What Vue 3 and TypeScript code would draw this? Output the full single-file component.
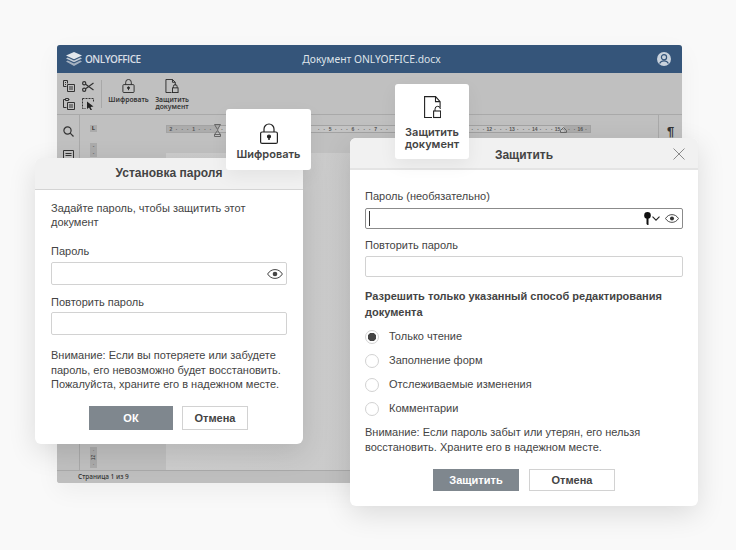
<script setup lang="ts">
const STEP = 5.75
const START = 170
const labelAt = (i: number): string => {
  if (i % 4 !== 0) return '·'
  const n = i / 4 - 2
  return n === 0 ? '' : String(Math.abs(n))
}
const hidden = (x: number) => (x > 222 && x < 315) || (x > 391 && x < 473)
const hMarks: string[] = Array.from({ length: 74 }, (_, i) =>
  hidden(START + i * STEP) ? '' : labelAt(i),
)
const modes = [
  { label: 'Только чтение', checked: true },
  { label: 'Заполнение форм', checked: false },
  { label: 'Отслеживаемые изменения', checked: false },
  { label: 'Комментарии', checked: false },
]
</script>

<template>
  <main class="page">
    <section class="app">
      <header class="titlebar">
        <div class="logo">
          <svg width="16" height="14" viewBox="0 0 16 14">
            <path d="M8 0 16 3.6 8 7.2 0 3.6Z" fill="#e3e7ec" />
            <path d="M1.8 5.6 8 8.4 14.2 5.6 16 6.6 8 10.2 0 6.6Z" fill="#c3ccd6" />
            <path d="M1.8 8.6 8 11.4 14.2 8.6 16 9.6 8 14 0 9.6Z" fill="#a4b1c0" />
          </svg>
          <span>ONLYOFFICE</span>
        </div>
        <div class="doc-title">Документ ONLYOFFICE.docx</div>
        <svg class="avatar" width="14" height="14" viewBox="0 0 14 14">
          <circle cx="7" cy="7" r="7" fill="#c9d2dc" />
          <circle cx="7" cy="5.2" r="2.6" fill="none" stroke="#35557a" stroke-width="1.2" />
          <path d="M2.6 11.4c1-2 2.6-2.6 4.4-2.6s3.4.6 4.4 2.6" fill="none" stroke="#35557a" stroke-width="1.2" />
        </svg>
      </header>

      <div class="toolbar">
        <div class="tools-grid">
          <svg width="12" height="12" viewBox="0 0 12 12" fill="none" stroke="#333">
            <path d="M4.5 3.5V.5H.5v6h3M2 2.5h1M2 4.5h1" /><path d="M4.5 4.5h7v7h-7zM6 7h4M6 9h4" />
          </svg>
          <svg width="12" height="11" viewBox="0 0 12 11" fill="none" stroke="#333" stroke-width="1.2">
            <circle cx="2.2" cy="2.2" r="1.6" /><circle cx="2.2" cy="8.8" r="1.6" /><path d="M3.6 3.2 11.5 9M3.6 7.8 11.5 2" />
          </svg>
          <svg width="12" height="13" viewBox="0 0 12 13" fill="none" stroke="#333">
            <path d="M3.5 10.5h-3v-8h2M6.5 2.5h-1" /><path d="M2.5 1.5h3v2h-3z" /><path d="M4.5 5.5h7v7h-7zM6 8h4M6 10h4" />
          </svg>
          <svg width="12" height="12" viewBox="0 0 12 12">
            <path d="M.5.5h11v3M.5.5v10h3" fill="none" stroke="#333" stroke-dasharray="2 1" />
            <path d="M5 3.500 11.500 8.500 8.500 9 10 12 8.500 12 7 9.500 5 11Z" fill="#222" />
          </svg>
        </div>
        <div class="tool-sep"></div>
        <div class="tool tool-a">
          <svg width="13" height="14" viewBox="0 0 13 15" fill="none" stroke="#2a2a2a">
            <path d="M3.500 6V3.500a3 3 0 0 1 6 0V6" /><rect x=".5" y="6" width="12" height="8.500" rx="1" /><circle cx="6.500" cy="9.500" r="1.100" fill="#2a2a2a" /><path d="M6.500 10v2" />
          </svg>
          <span>Шифровать</span>
        </div>
        <div class="tool tool-b">
          <svg width="14" height="14" viewBox="0 0 14 15" fill="none" stroke="#2a2a2a">
            <path d="M6.500 14.500h-6V.5h7l3 3V7M7.500.5v3h3" /><path d="M8.500 9.500V8a2 2 0 0 1 4 0v1.500" /><rect x="7.500" y="9.500" width="6" height="5" />
          </svg>
          <span>Защитить<br />документ</span>
        </div>
      </div>

      <div class="workspace">
        <aside class="side-left">
          <svg width="11" height="11" viewBox="0 0 11 11" fill="none" stroke="#333" stroke-width="1.200">
            <circle cx="4.500" cy="4.500" r="3.600" /><path d="M7.200 7.200 10.500 10.500" />
          </svg>
          <svg width="11" height="11" viewBox="0 0 11 11" fill="none" stroke="#333">
            <path d="M.5.500h10v8h-6l-2 2v-2h-2zM2.500 3.500h6M2.500 5.500h6" />
          </svg>
        </aside>
        <div class="v-ruler-col">
          <div class="corner">L</div>
          <div class="v-ruler">
            <span>-</span><span>-</span>
            <i class="v-spacer"></i>
            <span>·</span><span class="turn">12</span><span>·</span>
          </div>
        </div>
        <div class="doc-area">
          <div class="h-ruler">
            <span v-for="(m, i) in hMarks" :key="i">{{ m }}</span>
            <svg class="marker m1" width="7" height="13" viewBox="0 0 7 13" fill="none" stroke="#666">
              <path d="M.5.500h6L3.500 5.500zM.5 10.500 3.500 6.500l3 4zM.5 10.500h6v2h-6z" />
            </svg>
            <svg class="marker m2" width="7" height="6" viewBox="0 0 7 6" fill="none" stroke="#666">
              <path d="M3.500.5 6.500 3.500v2h-6v-2z" />
            </svg>
          </div>
          <div class="sheet"></div>
        </div>
        <aside class="side-right">¶</aside>
      </div>

      <footer class="statusbar">Страница 1 из 9</footer>
    </section>

    <div class="callout callout-encrypt">
      <svg width="18" height="21" viewBox="0 0 18 21" fill="none" stroke="#222" stroke-width="1.200">
        <path d="M4 9V6a5 5 0 0 1 10 0v3" /><rect x=".6" y="9" width="16.800" height="11.400" rx="1.500" /><circle cx="9" cy="13.500" r="1.500" fill="#222" /><path d="M9 14v3" stroke-width="1.500" />
      </svg>
      <span>Шифровать</span>
    </div>

    <div class="callout callout-protect">
      <svg width="17" height="23" viewBox="0 0 17 23" fill="none" stroke="#222" stroke-width="1.100">
        <path d="M8 21.500H.6V.6h11l4.500 5v6M11.500.6v5h4.500" /><path d="M11 15v-2a2.700 2.700 0 0 1 5.400 0" stroke-width="1" /><rect x="9.600" y="15" width="7" height="6.500" />
      </svg>
      <span>Защитить<br />документ</span>
    </div>

    <section class="dialog dialog-left">
      <h2 class="dlg-head">Установка пароля</h2>
      <div class="dlg-body">
        <p class="intro">Задайте пароль, чтобы защитить этот документ</p>
        <label class="fld-label">Пароль</label>
        <div class="input">
          <svg class="eye" width="16" height="10" viewBox="0 0 16 10" fill="none" stroke="#444">
            <path d="M.6 5C2.500 2 5 .6 8 .6S13.500 2 15.400 5C13.500 8 11 9.400 8 9.400S2.500 8 .6 5Z" /><circle cx="8" cy="5" r="2.300" fill="#444" stroke="none" />
          </svg>
        </div>
        <label class="fld-label second">Повторить пароль</label>
        <div class="input"></div>
        <p class="warn">Внимание: Если вы потеряете или забудете пароль, его невозможно будет восстановить. Пожалуйста, храните его в надежном месте.</p>
        <div class="actions left">
          <button class="btn primary ok">ОК</button>
          <button class="btn cancel-l">Отмена</button>
        </div>
      </div>
    </section>

    <section class="dialog dialog-right">
      <div class="dlg-head">
        <h2>Защитить</h2>
        <svg class="close" width="12" height="12" viewBox="0 0 12 12" stroke="#8a8a8a" stroke-width="1">
          <path d="M.5.500 11.500 11.500M11.500.500.5 11.500" />
        </svg>
      </div>
      <div class="dlg-body r">
        <label class="fld-label">Пароль (необязательно)</label>
        <div class="input focus">
          <i class="caret"></i>
          <svg width="7" height="13" viewBox="0 0 7 13" fill="#111"><circle cx="3.500" cy="3.400" r="3.300" /><path d="M2.500 5h2v8l-1 0-1-1z" /></svg>
          <svg class="chev" width="8" height="5" viewBox="0 0 8 5" fill="none" stroke="#222" stroke-width="1.100"><path d="M.5.700 4 4.200 7.500.7" /></svg>
          <svg class="eye-r" width="14" height="9" viewBox="0 0 16 10" fill="none" stroke="#333"><path d="M.6 5C2.500 2 5 .6 8 .6S13.500 2 15.400 5C13.500 8 11 9.400 8 9.400S2.500 8 .6 5Z" /><circle cx="8" cy="5" r="2.300" fill="#333" stroke="none" /></svg>
        </div>
        <label class="fld-label repeat">Повторить пароль</label>
        <div class="input"></div>
        <p class="allow">Разрешить только указанный способ редактирования документа</p>
        <div class="modes">
          <div v-for="m in modes" :key="m.label" class="mode">
            <span class="radio" :class="{ on: m.checked }"></span>
            <span>{{ m.label }}</span>
          </div>
        </div>
        <p class="warn r">Внимание: Если пароль забыт или утерян, его нельзя восстановить. Храните его в надежном месте.</p>
        <div class="actions">
          <button class="btn primary protect">Защитить</button>
          <button class="btn cancel-r">Отмена</button>
        </div>
      </div>
    </section>
  </main>
</template>

<style>
html, body { margin: 0; background: #f9f9f9; }
</style>

<style scoped>
.page {
  position: relative;
  width: 736px;
  height: 550px;
  overflow: hidden;
  padding: 45px 54px 0 57px;
  box-sizing: border-box;
  background: #f9f9f9;
  font-family: "Liberation Sans", Arial, sans-serif;
  color: #444;
}
.app {
  height: 438px;
  display: flex;
  flex-direction: column;
  border-radius: 3px;
  overflow: hidden;
  background: #c0c0c0;
  box-shadow: 0 8px 24px rgba(0, 0, 0, 0.05);
}
.titlebar {
  flex: 0 0 28px;
  display: flex;
  align-items: center;
  padding: 0 11px 0 9px;
  background: #35557a;
  color: #dfe4ea;
}
.logo { display: flex; align-items: center; gap: 3px; width: 150px; }
.logo span { font: 600 10px "Open Sans", sans-serif; letter-spacing: -0.5px; color: #d8dee5; }
.doc-title { flex: 1; text-align: center; font: 400 10.3px "Noto Sans", sans-serif; padding-right: 130px; color: #dfe4ea; }
.avatar { flex: none; }

.toolbar {
  flex: 0 0 42px;
  box-sizing: border-box;
  display: flex;
  align-items: flex-start;
  padding: 7px 0 0 6px;
  border-bottom: 1px solid #a9a9a9;
  background: #c0c0c0;
}
.tools-grid { display: grid; grid-template-columns: 12px 12px; gap: 5px 7px; align-items: center; }
.tool-sep { width: 1px; height: 28px; background: #a8a8a8; margin: 0 6px 0 7px; }
.tool {
  display: flex; flex-direction: column; align-items: center; gap: 2.5px; margin-top: -1px;
  font: 600 6.8px/7.5px "Noto Sans", sans-serif; color: #333; text-align: center; white-space: nowrap;
}
.tool-a { width: 41px; }
.tool-b { width: 46px; }

.workspace { flex: 1; display: flex; min-height: 0; background: #c0c0c0; }
.side-left {
  flex: 0 0 23px;
  box-sizing: border-box;
  border-right: 1px solid #a9a9a9;
  display: flex;
  flex-direction: column;
  align-items: center;
  padding-top: 11px;
  gap: 13px;
}
.v-ruler-col { flex: 0 0 86px; display: flex; flex-direction: column; align-items: flex-start; padding-left: 10px; box-sizing: border-box; }
.corner {
  width: 7px; height: 7px; margin-top: 10px; background: #ababab; color: #222;
  font: 700 5px/7px "Liberation Sans", sans-serif; text-align: center;
}
.v-ruler {
  width: 7px; margin-top: 11px; flex: 1; margin-bottom: 2px; box-sizing: border-box;
  background: #ababab; display: flex; flex-direction: column; align-items: center;
  font: 5px/7px "Liberation Sans", sans-serif; color: #333;
}
.v-spacer { flex: 1; background: #c0c0c0; align-self: stretch; }
.turn { transform: rotate(-90deg); }
.doc-area { flex: 1; min-width: 0; display: flex; flex-direction: column; }
.h-ruler {
  position: relative;
  width: 425px; height: 8px; margin-top: 10px; box-sizing: border-box; padding-left: 1px;
  border: 1px solid #a3a3a3;
  background: linear-gradient(90deg, #acacac 0 52px, #c4c4c4 52px 397px, #acacac 397px);
  display: grid; grid-template-columns: repeat(74, 5.7px);
  font: 700 5px/6px "Liberation Sans", sans-serif; color: #555; text-align: center;
}
.h-ruler span { white-space: nowrap; }
.marker { position: absolute; }
.m1 { left: 47px; top: -2px; }
.m2 { left: 393px; top: 1px; }
.sheet { flex: 1; margin-top: 20px; background: linear-gradient(90deg, #cdcdcd, #c6c6c6); }
.side-right {
  flex: 0 0 24px; box-sizing: border-box; border-left: 1px solid #a9a9a9;
  text-align: center; padding-top: 9px; font: 700 13px "Liberation Sans", sans-serif; color: #333;
}
.statusbar {
  flex: 0 0 13px; box-sizing: border-box; border-top: 1px solid #a9a9a9; padding-left: 21px;
  font: 500 6.5px/12px "Noto Sans", sans-serif; color: #333; background: #bebebe;
}

.callout {
  position: absolute; z-index: 3; box-sizing: border-box; background: #fff; border-radius: 3px;
  display: flex; flex-direction: column; align-items: center;
  font: 600 11px/12px Inter, sans-serif; color: #444; text-align: center;
  box-shadow: 0 6px 18px rgba(0, 0, 0, 0.06);
}
.callout-encrypt { left: 226px; top: 109px; width: 85px; height: 61px; padding-top: 14px; gap: 4px; }
.callout-protect { left: 395px; top: 84px; width: 74px; height: 75px; padding-top: 12px; gap: 7px; }

.dialog {
  position: absolute; box-sizing: border-box; background: #fff; border-radius: 6px; overflow: hidden;
  box-shadow: 0 8px 28px rgba(0, 0, 0, 0.12); z-index: 2;
}
.dialog-left { left: 35px; top: 158px; width: 268px; height: 286px; }
.dialog-right { left: 350px; top: 138px; width: 348px; height: 368px; }
.dlg-head, .dialog h2 { font: 700 12px/16px "Liberation Sans", sans-serif; color: #444; margin: 0; }
.dlg-head { background: #f1f1f1; text-align: center; box-sizing: border-box; }
.dialog-left .dlg-head { height: 32px; line-height: 31px; border-bottom: 1px solid #d4d4d4; }
.dialog-right .dlg-head { position: relative; height: 32px; padding-top: 9px; border-bottom: 2px solid #e4e4e4; }
.close { position: absolute; right: 13px; top: 10px; }
.dlg-body { padding: 10px 16px 0; font-size: 11px; line-height: 15px; color: #444; }
.dlg-body.r { padding: 19px 15px 0; }
.intro { margin: 0; height: 30px; line-height: 14px; padding-top: 1px; box-sizing: content-box; }
.fld-label { display: block; margin-top: 13px; height: 15px; }
.fld-label.second { margin-top: 10px; height: 14px; }
.dlg-body.r .fld-label { margin-top: 0; height: 14px; }
.dlg-body.r .fld-label.repeat { margin-top: 9px; }
.input {
  box-sizing: border-box; height: 23px; margin-top: 3px; border: 1px solid #d2d2d2; border-radius: 2px;
  display: flex; align-items: center; justify-content: flex-end; padding-right: 3px; background: #fff;
}
.dlg-body.r .input { height: 21px; margin-top: 4px; }
.dlg-body.r .input.focus { margin-top: 5px; }
.input.focus { border-color: #8b8b8b; position: relative; padding-right: 3px; }
.caret { position: absolute; left: 3px; top: 2px; width: 1px; height: 15px; background: #333; }
.chev { margin: 0 5px 0 1px; }
.allow { margin: 11px 0 0; font-weight: 700; line-height: 16px; color: #444; }
.modes { margin-top: 9px; display: flex; flex-direction: column; gap: 9px; }
.mode { display: flex; align-items: center; gap: 10px; height: 15px; }
.radio { width: 14px; height: 14px; box-sizing: border-box; border: 1px solid #d2d2d2; border-radius: 50%; background: #fff; display: block; }
.radio.on { background: radial-gradient(circle, #444 0 4px, #fff 4.5px); }
.warn { margin: 13px 0 0; line-height: 14.5px; }
.warn.r { margin-top: 9px; line-height: 15px; }
.actions { display: flex; justify-content: center; gap: 8px; margin-top: 14.5px; }
.actions.left { justify-content: flex-start; padding-left: 38px; gap: 9px; }
.btn {
  box-sizing: border-box; height: 24px; padding: 0; border: 1px solid #d2d2d2; background: #fff; color: #444;
  font: 700 11px "Liberation Sans", sans-serif;
}
.btn.primary { background: #7f878e; border-color: #7f878e; color: #fff; }
.ok { width: 84px; }
.cancel-l { width: 66px; }
.protect { width: 86px; height: 22px; }
.cancel-r { width: 86px; height: 22px; }
.dlg-body.r .actions { gap: 10px; margin-top: 14px; }
</style>
